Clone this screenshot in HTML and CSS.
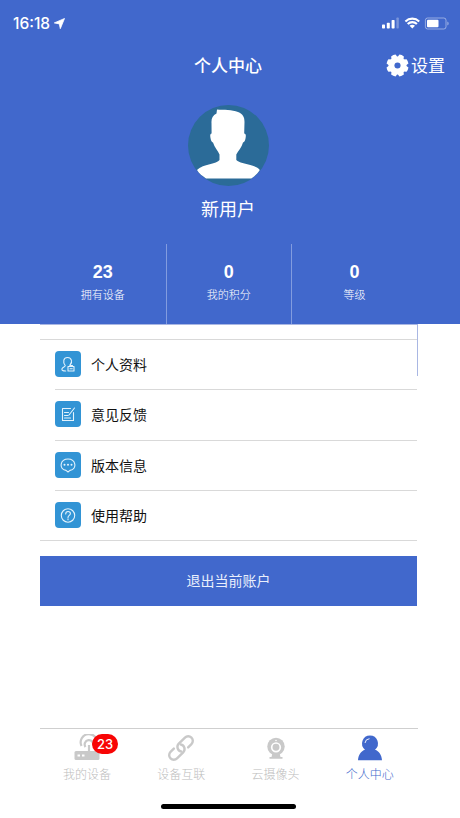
FILE: index.html
```html
<!DOCTYPE html>
<html lang="zh-CN">
<head>
<meta charset="utf-8">
<title>个人中心</title>
<link rel="stylesheet" href="styles.css">
</head>
<body>
<div class="screen">
  <header class="hero">
    <div class="status">
      <div class="clock">16:18
        <svg class="loc" viewBox="0 0 11 11"><path d="M10.500.5.3 4.900l5 1 1 4.800z" fill="#fff" stroke="#fff" stroke-width=".8"/></svg>
      </div>
      <svg class="signals" viewBox="0 0 68 14">
        <g fill="#fff">
          <rect x="0" y="8.500" width="3" height="4" rx=".7"/>
          <rect x="4.800" y="6.700" width="3" height="5.800" rx=".7"/>
          <rect x="9.600" y="4" width="3" height="8.500" rx=".7"/>
          <rect x="14.400" y="1.500" width="2.400" height="11" rx=".7" opacity=".3"/>
          <path d="m30.300 12.500-2.700-2.700a3.700 3.700 0 0 1 5.400 0z"/>
          <rect x="45" y="3.700" width="11.500" height="7.600" rx="1"/>
          <path d="M65.400 5.500v4c1.600-.6 1.600-3.400 0-4z" opacity=".5"/>
        </g>
        <g fill="none" stroke="#fff">
          <path d="M23.400 5.400a10 10 0 0 1 13.800 0M25.700 8a6.600 6.600 0 0 1 9.200 0" stroke-width="2.100"/>
          <rect x="43.400" y="2" width="20.600" height="11" rx="2.200" opacity=".45"/>
        </g>
      </svg>
    </div>
    <div class="nav">
      <h1>个人中心</h1>
      <div class="settings">
        <svg class="gear" viewBox="-12 -12 24 24">
          <mask id="hole"><rect x="-12" y="-12" width="24" height="24" fill="#fff"/><circle r="3.200" fill="#000"/></mask>
          <g fill="#fff" mask="url(#hole)">
            <circle r="9.300"/>
            <g transform="rotate(22.500)">
              <path id="t" d="M-3.400-8-2.500-11.300Q0-12 2.500-11.300L3.400-8V8L2.500 11.300Q0 12-2.500 11.300L-3.400 8z"/>
              <use href="#t" transform="rotate(45)"/><use href="#t" transform="rotate(90)"/><use href="#t" transform="rotate(135)"/>
            </g>
          </g>
        </svg>
        <span>设置</span>
      </div>
    </div>
    <svg class="avatar" viewBox="0 0 81 81">
      <circle cx="40.500" cy="40.500" r="40.500" fill="#2b6b98"/>
      <path d="M29 4.500C36 5 44 4.500 50 7c5 2 6.500 5 6.500 10l-.3 11.500c2 .2 1.800 2.500 1.300 5-.4 2.300-1.200 3.500-2.500 4C54 42 50 46 48.300 49.500V55c3 3 9 3.500 14 5 5 1.500 7.500 2.500 9.500 5-2 3.500-5 6-8.500 8.500H18c-3.500-2.500-7-5-9-8.500 2.500-2.500 5-3.500 10-5 5-1.500 10-2 12.500-5v-5.500C30 46 26.500 42.500 25 37.500c-1.500-.5-2-2-2.400-4-.6-3-.6-4.500 1-5L23.500 18c-.3-4 1-7.500 5-9.500z" fill="#fff"/>
    </svg>
    <div class="name">新用户</div>
    <div class="stats">
      <div class="stat"><b>23</b><span>拥有设备</span></div>
      <div class="stat"><b>0</b><span>我的积分</span></div>
      <div class="stat"><b>0</b><span>等级</span></div>
    </div>
  </header>
  <main class="content">
    <ul class="menu">
      <li><svg viewBox="0 0 26 26"><path d="M10.200 14.500C7.500 11 8.500 6.500 12.500 6.500s5.500 4.500 2.500 7.500M10.200 14.500c.5 1.300-2.500 1.500-3.200 3.200-.6 1.600 1 2.300 3.700 2.300M13 15.500h6v4.500h-6zM14.800 15.500v-1h2.700v1M15 17.700h2.300"/></svg><span>个人资料</span></li>
      <li><svg viewBox="0 0 26 26"><path d="M15.500 7.500h-8v12h11v-8M9.500 11.500h4M9.500 14.500h3.500M9.500 17h6M19.500 7l-5.500 7"/></svg><span>意见反馈</span></li>
      <li><svg viewBox="0 0 26 26"><path d="M11 18.400c-8-1.600-5.500-11.400 2-11.400s10 9.800 2 11.400l-2 1.600z"/><path class="dots" d="M9.500 12.800h.01M13 12.800h.01M16.500 12.800h.01"/></svg><span>版本信息</span></li>
      <li><svg viewBox="0 0 26 26"><circle cx="13" cy="13.500" r="6.700"/><path d="M10.700 12c0-3.200 4.700-3.200 4.700-.4 0 1.800-2.400 1.900-2.400 3.900M13 16.800v.9"/></svg><span>使用帮助</span></li>
    </ul>
    <button class="logout">退出当前账户</button>
  </main>
  <nav class="tabs">
    <div class="tab">
      <svg viewBox="0 0 28 28"><rect x="1.500" y="17" width="25" height="9" rx="1.500" fill="#c9c9c9"/><path d="M8.500 12a8.300 8.300 0 1 1 15.500-1.500M12.500 13a4.300 4.300 0 1 1 7.500-1M16 11v7" fill="none" stroke="#c9c9c9" stroke-width="2.200"/><path d="M4.500 21.500H7M9 21.500h2.500" stroke="#fff" stroke-width="2"/></svg>
      <span>我的设备</span><i class="badge">23</i>
    </div>
    <div class="tab">
      <svg viewBox="0 0 28 28"><g transform="translate(14 14) rotate(-45)" fill="none" stroke="#c9c9c9" stroke-width="2.400" stroke-linecap="round"><path id="link" d="M5.500 4.600h4.700a4.600 4.600 0 0 0 0-9.200H1.500a4.600 4.600 0 0 0-3.800 7.200"/><use href="#link" transform="rotate(180)"/></g></svg>
      <span>设备互联</span>
    </div>
    <div class="tab">
      <svg viewBox="0 0 28 28"><circle cx="14" cy="12.500" r="8.700" fill="#c9c9c9"/><path d="M10.500 19h7l1 4h2v1.700h-13V23h2z" fill="#c9c9c9"/><circle cx="14" cy="13.300" r="4.300" fill="none" stroke="#fff" stroke-width="1.700"/><circle cx="14" cy="6.500" r=".8" fill="#fff"/></svg>
      <span>云摄像头</span>
    </div>
    <div class="tab active">
      <svg viewBox="0 0 28 28"><path d="M14 1.500a8 8 0 0 1 5 14.200c4 1.300 6.700 5 7 10.600H2c.3-5.600 3-9.300 7-10.600A8 8 0 0 1 14 1.500z" fill="#4168cc"/><path d="M9 9a4.800 4.800 0 0 1 4.500-4.300" fill="none" stroke="#fff" stroke-width=".9"/></svg>
      <span>个人中心</span>
    </div>
  </nav>
  <div class="home"></div>
</div>
</body>
</html>
```
FILE: styles.css
```css
* { box-sizing: border-box; }

body {
  margin: 0;
  background: #fff;
  color: #111;
  font-family: "Liberation Sans", "Noto Sans CJK SC", sans-serif;
}

.screen {
  width: 460px;
  height: 818px;
  display: flex;
  flex-direction: column;
  overflow: hidden;
}

.hero {
  height: 324px;
  flex: none;
  display: flex;
  flex-direction: column;
  align-items: center;
  background: #4168cc;
  color: #fff;
}

.status {
  align-self: stretch;
  height: 46px;
  padding: 0 10px 0 13px;
  display: flex;
  align-items: center;
  justify-content: space-between;
}

.clock {
  display: flex;
  align-items: center;
  gap: 4px;
  padding-top: 1px;
  font: 500 15.500px/20px Inter, sans-serif;
}

.loc { width: 11px; height: 11px; }

.signals { width: 68px; height: 14px; }

.nav {
  align-self: stretch;
  height: 38px;
  padding: 1px 15px 0 0;
  display: grid;
  grid-template-columns: 1fr auto 1fr;
  align-items: center;
}

.nav h1 {
  grid-column: 2;
  margin: 2px 0 0 11px;
  font-size: 17px;
  line-height: 24px;
  font-weight: 500;
}

.settings {
  justify-self: end;
  display: flex;
  align-items: center;
  gap: 2px;
  font-size: 17px;
  line-height: 24px;
}

.settings span { padding-top: 2px; }

.gear { width: 23px; height: 23px; }

.avatar {
  width: 81px;
  height: 81px;
  margin: 21px 0 0 -3px;
}

.name {
  margin: 11px 0 0 -4px;
  font-size: 18px;
  line-height: 26px;
}

.stats {
  width: 377px;
  height: 80px;
  margin: auto 3px 0 0;
  display: grid;
  grid-template-columns: 125.500px 125.500px 1fr;
}

.stat {
  padding-top: 17px;
  display: flex;
  flex-direction: column;
  align-items: center;
}

.stat + .stat { border-left: 1px solid #829cdf; }

.stat b { font-size: 18px; line-height: 22px; }

.stat span {
  margin-top: 4px;
  font-size: 11px;
  line-height: 17px;
  font-weight: 300;
}

.content { width: 378px; margin-left: 40px; }

.menu {
  list-style: none;
  margin: 0;
  padding: 14px 0 0;
  border-top: 1px solid #dce1f2;
  border-right: 1px solid;
  border-image: linear-gradient(#a9b7e3 52px, transparent 52px) 1;
}

.menu li {
  height: 50.300px;
  padding-left: 15px;
  display: flex;
  align-items: center;
  gap: 10px;
  font-size: 14px;
  background: linear-gradient(#d9d9d9, #d9d9d9) 15px 0 / 100% 1px no-repeat;
}

.menu li:first-child { background-position: 0 0; }

.menu li:last-child { height: 51px; border-bottom: 1px solid #d9d9d9; }

.menu svg {
  width: 26px;
  height: 26px;
  border-radius: 4px;
  background: #3294d5;
  fill: none;
  stroke: #e4f3fd;
  stroke-width: 1.1;
  stroke-linecap: round;
  stroke-linejoin: round;
}

.menu .dots { stroke-width: 2; }

.logout {
  display: block;
  width: 377px;
  height: 50px;
  margin-top: 15px;
  padding: 0 0 1px;
  border: 0;
  background: #4168cc;
  color: #e9effc;
  font: inherit;
  font-size: 14px;
}

.tabs {
  width: 378px;
  height: 76px;
  margin: auto 0 0 40px;
  padding-right: 1px;
  flex: none;
  display: grid;
  grid-template-columns: repeat(4, 1fr);
  border-top: 1px solid #cfcfcf;
}

.tab {
  position: relative;
  padding-top: 5px;
  display: flex;
  flex-direction: column;
  align-items: center;
  font-size: 12px;
  line-height: 18px;
  font-weight: 300;
  color: #bdbdbd;
}

.tab svg { width: 28px; height: 28px; margin-bottom: 4px; }

.tab.active { color: #4168cc; }

.badge {
  position: absolute;
  left: 52px;
  top: 5px;
  width: 26px;
  height: 20px;
  border-radius: 10px;
  background: #f80505;
  color: #fff;
  font: 500 13px/20px Inter, sans-serif;
  text-align: center;
}

.home {
  width: 135px;
  height: 5px;
  flex: none;
  margin: 0 0 9px 161px;
  border-radius: 3px;
  background: #000;
}
```
